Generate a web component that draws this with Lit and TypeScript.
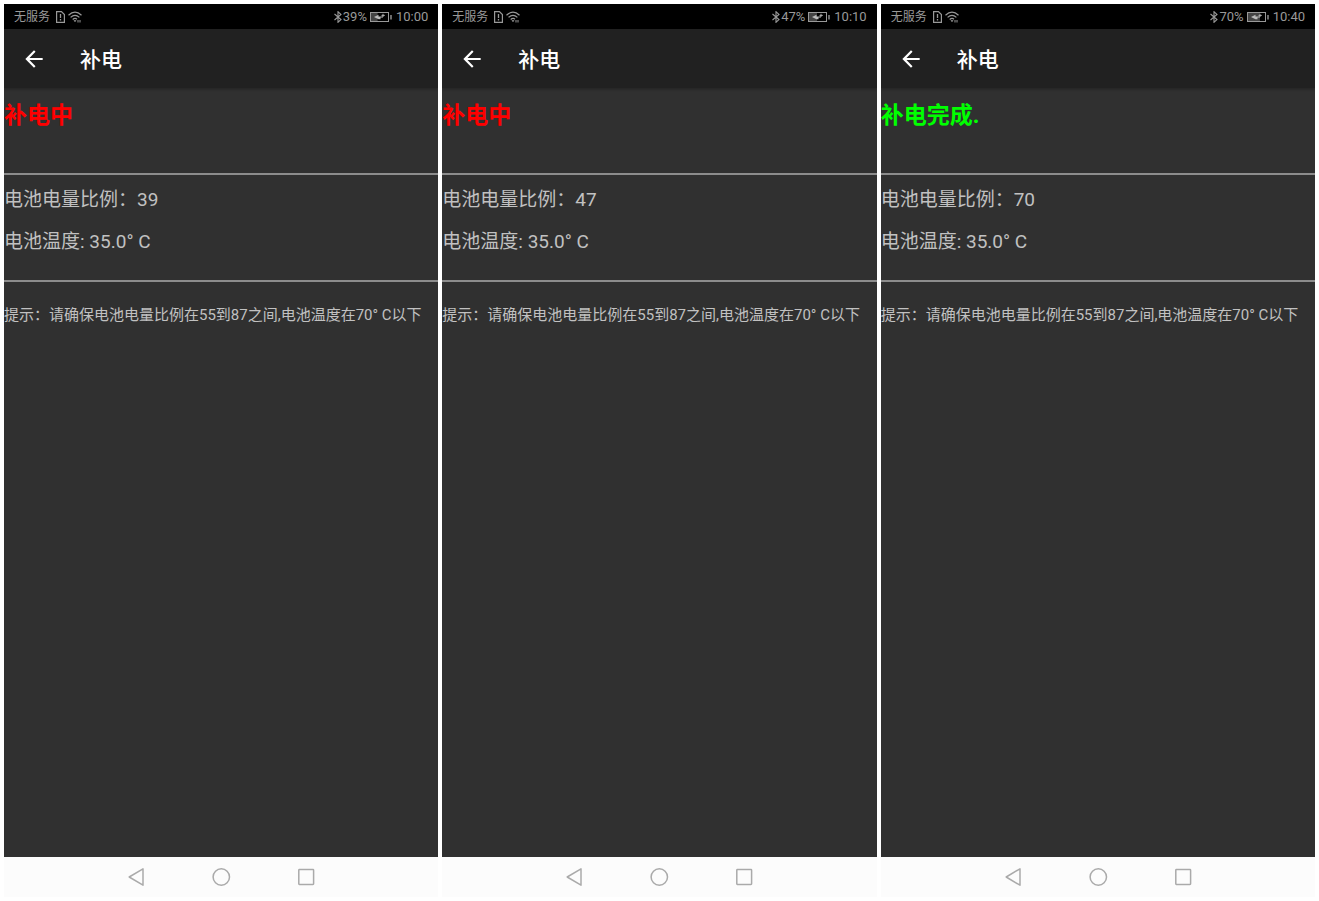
import { LitElement, html, css } from "lit";
import { customElement, property } from "lit/decorators.js";

interface Reading {
  done: boolean;
  level: number;
  temperature: string;
  time: string;
}

const READINGS: Reading[] = [
  { done: false, level: 39, temperature: "35.0", time: "10:00" },
  { done: false, level: 47, temperature: "35.0", time: "10:10" },
  { done: true, level: 70, temperature: "35.0", time: "10:40" },
];

@customElement("status-bar")
class StatusBar extends LitElement {
  @property({ type: Number }) level = 0;
  @property() time = "";

  static styles = css`
    :host {
      display: flex;
      justify-content: space-between;
      align-items: center;
      height: 25px;
      padding: 0 10px;
      background: #000;
      color: #999;
      font-size: 13px;
      line-height: 16px;
    }
    .group {
      display: flex;
      align-items: center;
      white-space: nowrap;
    }
    .carrier {
      font-size: 12px;
      margin-right: 6px;
    }
    .wifi {
      margin-left: 3px;
    }
    .battery {
      margin: 0 4px 0 3px;
    }
    svg {
      display: block;
      fill: none;
      stroke: currentColor;
    }
  `;

  render() {
    return html`
      <div class="group">
        <span class="carrier">无服务</span>
        <svg width="9" height="12" viewBox="0 0 9 12">
          <path d="M.6 .6H5.4L8.4 3.6V11.4H.6Z" stroke-width="1.2" />
          <path d="M4.5 3V7M4.5 8V9.4" stroke-width="1.3" />
        </svg>
        <svg class="wifi" width="14" height="12" viewBox="0 0 14 12">
          <path d="M.5 4.2Q7-1.8 13.5 4.2M2.6 6.4Q7 2.4 11.4 6.4M4.7 8.5Q7 6.5 9 8.2" stroke-width="1.2" />
          <path d="M6 9.5L7 10.8L8 9.5Z" fill="currentColor" stroke-width=".6" />
          <path d="M10 9V11.5M12 9V11.5" stroke-width="1" />
        </svg>
      </div>
      <div class="group">
        <svg width="10" height="12" viewBox="0 0 10 12">
          <path d="M1.5 3L8 8.5L5 11.3V.7L8 3.5L1.5 9" stroke-width="1.1" />
        </svg>
        <span>${this.level}%</span>
        <svg class="battery" width="22" height="10" viewBox="0 0 22 10">
          <rect x=".5" y=".5" width="18" height="9" />
          <rect x="1" y="1" width=${this.level * 0.17} height="8" fill="#444" stroke="none" />
          <path d="M4 5L8.5 2.8V4.4H13V5.6H10.5V7.2H8.5Z" fill="#bbb" stroke="none" />
          <path d="M13 1.8V5M11.5 3.4H14.8" stroke="#bbb" stroke-width=".9" />
          <path d="M21 3V7.5" stroke-width="1.4" />
        </svg>
        <span>${this.time}</span>
      </div>
    `;
  }
}

@customElement("nav-bar")
class NavBar extends LitElement {
  static styles = css`
    :host {
      display: flex;
      justify-content: center;
      align-items: center;
      gap: 45px;
      height: 40px;
      background: #fcfcfc;
    }
    button {
      display: flex;
      align-items: center;
      justify-content: center;
      width: 40px;
      height: 40px;
      padding: 0;
      border: 0;
      background: none;
      color: #aaa;
    }
    svg {
      fill: none;
      stroke: currentColor;
      stroke-width: 1.5;
      stroke-linejoin: round;
    }
  `;

  render() {
    return html`
      <button aria-label="返回">
        <svg width="20" height="20" viewBox="0 0 20 20"><path d="M3.2 10L17 1.8V18.2Z" /></svg>
      </button>
      <button aria-label="主屏幕">
        <svg width="20" height="20" viewBox="0 0 20 20"><circle cx="10.3" cy="10" r="8.2" /></svg>
      </button>
      <button aria-label="最近任务">
        <svg width="20" height="20" viewBox="0 0 20 20"><rect x="2.8" y="2.6" width="14.8" height="14.8" rx=".6" /></svg>
      </button>
    `;
  }
}

@customElement("phone-screen")
class PhoneScreen extends LitElement {
  @property({ attribute: false }) reading!: Reading;

  static styles = css`
    :host {
      display: flex;
      flex-direction: column;
      min-width: 0;
      overflow: hidden;
      background: #303030;
      color: #c1c1c1;
    }
    .appbar {
      display: flex;
      align-items: center;
      gap: 33px;
      height: 59px;
      padding: 0 17px;
      background: #212121;
      box-shadow: 0 1px 3px rgba(0, 0, 0, 0.3);
      color: #fff;
    }
    .back {
      display: flex;
      padding: 0;
      border: 0;
      background: none;
      color: inherit;
    }
    .title {
      margin: 0;
      padding-top: 2px;
      font-size: 21px;
      line-height: 28px;
      font-weight: 500;
    }
    .content {
      flex: 1;
    }
    .state {
      margin: 0;
      padding: 15px 0 44px;
      font-size: 23px;
      line-height: 26px;
      font-weight: 700;
      color: #f00;
    }
    .state.done {
      color: #0f0;
    }
    .values {
      display: flex;
      flex-direction: column;
      gap: 18px;
      padding: 13px 0 26px;
      border: solid #8c8c8c;
      border-width: 2px 0;
      font-size: 19px;
      line-height: 24px;
    }
    .values p,
    .hint {
      margin: 0;
    }
    .hint {
      padding-top: 23px;
      font-size: 15px;
      line-height: 20px;
    }
  `;

  render() {
    const { done, level, temperature, time } = this.reading;
    return html`
      <status-bar .level=${level} .time=${time}></status-bar>
      <header class="appbar">
        <button class="back" aria-label="返回">
          <svg width="26" height="26" viewBox="0 0 24 24" fill="currentColor">
            <path d="M20 11H7.83l5.59-5.59L12 4l-8 8 8 8 1.41-1.41L7.83 13H20v-2z" />
          </svg>
        </button>
        <h1 class="title">补电</h1>
      </header>
      <main class="content">
        <h2 class="state ${done ? "done" : ""}">${done ? "补电完成." : "补电中"}</h2>
        <div class="values">
          <p>电池电量比例：${level}</p>
          <p>电池温度: ${temperature}° C</p>
        </div>
        <p class="hint">提示：请确保电池电量比例在55到87之间,电池温度在70° C以下</p>
      </main>
      <nav-bar></nav-bar>
    `;
  }
}

@customElement("app-root")
class AppRoot extends LitElement {
  static styles = css`
    :host {
      display: grid;
      grid-template-columns: repeat(3, minmax(0, 1fr));
      gap: 4px;
      box-sizing: border-box;
      min-height: 100vh;
      padding: 4px;
      background: #fff;
      font-family: Roboto, "Noto Sans CJK SC", sans-serif;
    }
  `;

  render() {
    return READINGS.map((reading) => html`<phone-screen .reading=${reading}></phone-screen>`);
  }
}
